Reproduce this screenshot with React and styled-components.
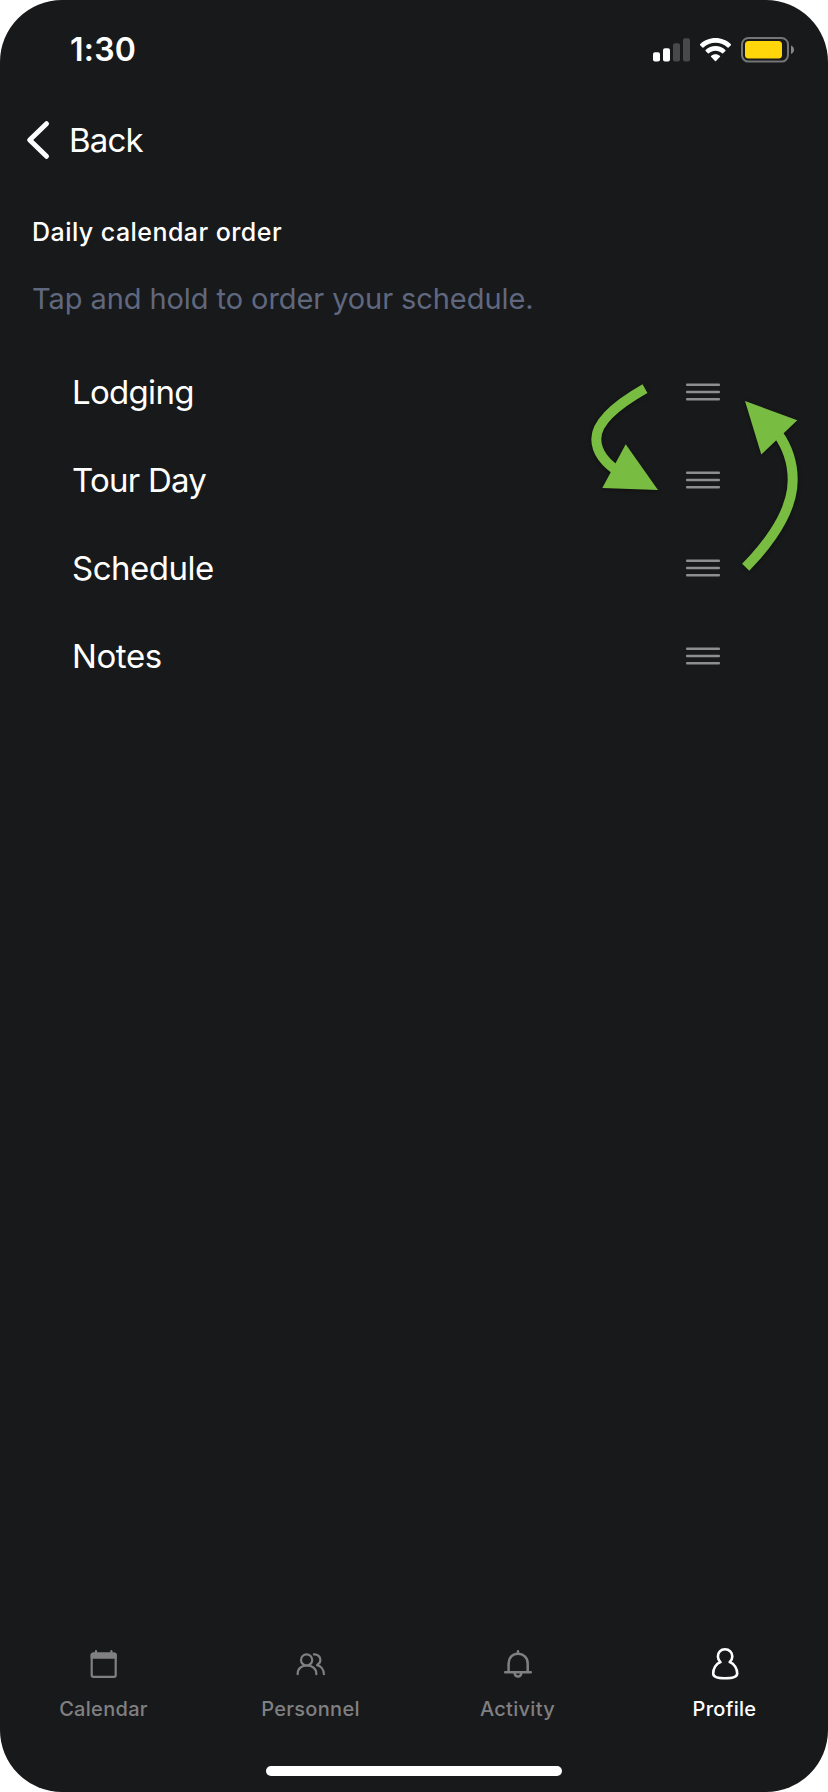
import React from "react";
import styled, { createGlobalStyle } from "styled-components";

const GlobalStyle = createGlobalStyle`
  * { box-sizing: border-box; }
  body { margin: 0; background: #fff; font-family: Inter, "Liberation Sans", sans-serif; }
  svg { display: block; flex: none; }
`;

const Phone = styled.div`
  position: relative;
  width: 828px;
  height: 1792px;
  display: flex;
  flex-direction: column;
  background: #18191a;
  border-radius: 62px;
  overflow: hidden;
  color: #fff;
`;

const Text = styled.span`
  white-space: nowrap;
  font-size: ${(p) => p.$size}px;
  font-weight: ${(p) => p.$weight || 400};
  letter-spacing: ${(p) => p.$track || 0}px;
  line-height: 40px;
`;

const StatusBar = styled.header`
  height: 100px;
  padding: 0 34px 0 70px;
  display: flex;
  justify-content: space-between;
  align-items: center;
`;

const StatusIcons = styled.div`
  display: flex;
  align-items: center;
  gap: 10px;
`;

const BackButton = styled.button`
  height: 80px;
  display: flex;
  align-items: center;
  gap: 18px;
  padding: 0 26px;
  border: 0;
  background: none;
  color: inherit;
  font-family: inherit;
`;

const Intro = styled.section`
  display: flex;
  flex-direction: column;
  gap: 27px;
  padding: 32px 32px 0;
`;

const Hint = styled(Text)`
  color: #606880;
`;

const OrderList = styled.ul`
  list-style: none;
  margin: 29px 0 0;
  padding: 0;
  flex: 1;
`;

const OrderRow = styled.li`
  height: 88px;
  padding: 0 108px 0 72px;
  display: flex;
  align-items: center;
  justify-content: space-between;
`;

const TabBar = styled.nav`
  height: 120px;
  display: grid;
  grid-template-columns: repeat(4, 1fr);
`;

const Tab = styled.div`
  display: flex;
  flex-direction: column;
  align-items: center;
  gap: 9px;
  color: ${(p) => (p.$active ? "#fff" : "#808082")};
`;

const HomeArea = styled.footer`
  height: 26px;
  display: flex;
  justify-content: center;
`;

const HomeIndicator = styled.div`
  width: 296px;
  height: 10px;
  border-radius: 5px;
  background: #fff;
`;

const Arrows = styled.svg`
  position: absolute;
  left: 580px;
  top: 370px;
  filter: drop-shadow(0 1px 2px rgba(0, 0, 0, 0.4));
`;

const Signal = () => (
  <svg width="37" height="24" viewBox="0 0 37 24" fill="#fff">
    <rect x="0" y="14.3" width="7" height="9.3" rx="2" />
    <rect x="10" y="10.3" width="7" height="13.3" rx="2" />
    <rect x="20" y="5.3" width="7" height="18.3" rx="2" fill="#48494a" />
    <rect x="30" y="0.3" width="7" height="23.3" rx="2" fill="#48494a" />
  </svg>
);

const Wifi = () => (
  <svg width="31" height="24" viewBox="0 0 31 24" fill="#fff">
    <path d="M15.5 0C21.5 0 27 2.3 30.9 6.2Q31.3 6.7 30.9 7.2L28.6 9.5Q28.1 9.9 27.6 9.5C24.4 6.5 20.1 4.8 15.5 4.8S6.600 6.5 3.400 9.5Q2.900 9.900 2.400 9.500L.1 7.200Q-.3 6.700 .1 6.200C4 2.300 9.500 0 15.500 0Z" />
    <path d="M15.500 8.100C19.300 8.100 22.800 9.500 25.400 12Q25.800 12.500 25.400 13L23.100 15.300Q22.600 15.700 22.100 15.300C20.300 13.700 18 12.800 15.500 12.800S10.700 13.700 8.900 15.300Q8.400 15.700 7.900 15.300L5.600 13Q5.200 12.500 5.600 12C8.200 9.500 11.700 8.100 15.500 8.100Z" />
    <path d="M15.500 16.200C17.200 16.200 18.800 16.800 20 17.900Q20.400 18.300 20 18.800L16 23.100Q15.500 23.600 15 23.100L11 18.800Q10.600 18.300 11 17.900C12.200 16.800 13.800 16.200 15.500 16.200Z" />
  </svg>
);

const Battery = () => (
  <svg width="53" height="26" viewBox="0 0 53 26">
    <rect x="1" y="1" width="46" height="23.6" rx="6.5" fill="none" stroke="#747576" strokeWidth="2" />
    <rect x="4" y="4" width="37" height="17.400" rx="3.500" fill="#ffd60a" />
    <path d="M50 8.500Q53 9.700 53 12.700T50 17Z" fill="#858687" />
  </svg>
);

const Chevron = () => (
  <svg width="25" height="40" viewBox="0 0 25 40" fill="none" stroke="#fff" strokeWidth="5" strokeLinecap="round" strokeLinejoin="round">
    <path d="M20.500 3.700L3.700 20L20.500 36.300" />
  </svg>
);

const Handle = () => (
  <svg width="34" height="18" viewBox="0 0 34 18" fill="#8e8e91">
    <rect y="0.400" width="34" height="2.600" rx="1" />
    <rect y="7.700" width="34" height="2.600" rx="1" />
    <rect y="14.900" width="34" height="2.600" rx="1" />
  </svg>
);

const TabIcon = ({ children, stroke = 2.2 }) => (
  <svg width="32" height="34" viewBox="0 0 32 34" fill="none" stroke="currentColor" strokeWidth={stroke} strokeLinecap="round" strokeLinejoin="round">
    {children}
  </svg>
);

const CalendarIcon = () => (
  <TabIcon stroke={2.2}>
    <rect x="3.700" y="7.500" width="24" height="23.300" rx="1.800" />
    <path d="M3.700 9Q3.700 7.500 5.200 7.500H26.200Q27.700 7.500 27.700 9V11.700H3.700Z" fill="currentColor" />
    <path d="M8 5V7M23.400 5V7" strokeWidth="2.200" />
  </TabIcon>
);

const PeopleIcon = () => (
  <TabIcon>
    <g transform="translate(-0.300 1.700)">
      <circle cx="11.900" cy="12.200" r="5.600" />
      <path d="M3 26.500V25.800C3 20.800 7 17.800 12.200 17.800S21.600 20.800 21.600 25.800V26.500" />
      <path d="M19.200 6.700C23 6.500 25.700 9 25.700 12.200C25.700 14.400 24.300 16.200 22.300 17.400C26.400 18.300 29.200 22 29.200 26.500" />
    </g>
  </TabIcon>
);

const BellIcon = () => (
  <TabIcon stroke={2.500}>
    <path d="M3.200 26.300H28.800M6.600 26V17.500C6.600 11.500 10.700 7.700 16 7.700S25.700 11.500 25.700 17.500V26M16 7.500V5.300" />
    <path d="M12.600 26.700C13 31.900 19 31.900 19.400 26.700" />
  </TabIcon>
);

const ProfileIcon = () => (
  <TabIcon stroke={2.600}>
    <path transform="translate(0 0.900)" d="M16 2.400C11.700 2.400 8.900 5.600 8.900 9.500C8.900 12 10 13.800 11.500 15.200C6.800 16.800 4.200 21.800 4.200 26.500C4.200 30.400 9 31.300 16 31.300S28.200 30.400 28.200 26.500C28.200 21.800 25.400 16.800 20.700 15.200C22.200 13.800 23.300 12 23.300 9.500C23.300 5.600 20.300 2.400 16 2.400Z" />
  </TabIcon>
);

const items = [
  { name: "Lodging", track: -0.7 },
  { name: "Tour Day", track: -0.75 },
  { name: "Schedule", track: -0.5 },
  { name: "Notes", track: -0.4 },
];

const tabs = [
  { name: "Calendar", Icon: CalendarIcon },
  { name: "Personnel", Icon: PeopleIcon },
  { name: "Activity", Icon: BellIcon },
  { name: "Profile", Icon: ProfileIcon, active: true },
];

export default function App() {
  return (
    <>
      <GlobalStyle />
      <Phone>
        <StatusBar>
          <Text $size={32} $weight={600} $track={0.2}>1:30</Text>
          <StatusIcons>
            <Signal />
            <Wifi />
            <Battery />
          </StatusIcons>
        </StatusBar>
        <BackButton>
          <Chevron />
          <Text $size={33} $track={-0.8}>Back</Text>
        </BackButton>
        <Intro>
          <Text $size={25} $weight={500} $track={0.45}>Daily calendar order</Text>
          <Hint $size={29} $track={-0.08}>Tap and hold to order your schedule.</Hint>
        </Intro>
        <OrderList>
          {items.map((item) => (
            <OrderRow key={item.name}>
              <Text $size={33} $track={item.track}>{item.name}</Text>
              <Handle />
            </OrderRow>
          ))}
        </OrderList>
        <TabBar>
          {tabs.map(({ name, Icon, active }) => (
            <Tab key={name} $active={active}>
              <Icon />
              <Text $size={20} $weight={500} $track={0.3}>{name}</Text>
            </Tab>
          ))}
        </TabBar>
        <HomeArea>
          <HomeIndicator />
        </HomeArea>
        <Arrows width="230" height="210" viewBox="580 370 230 210" fill="none" stroke="#78bc42" strokeWidth="10">
          <path d="M645 388.700C611 408 596.300 424 596.300 439C596.300 451 604 463 622 474" />
          <path d="M625.700 444.300L602.300 488L658 490Z" fill="#78bc42" stroke="none" />
          <path d="M745.700 567.300C776 536 792.700 507 792.700 480C792.700 463 788 448 778 434" />
          <path d="M745 401L797.300 420.300L761.300 454.500Z" fill="#78bc42" stroke="none" />
        </Arrows>
      </Phone>
    </>
  );
}
